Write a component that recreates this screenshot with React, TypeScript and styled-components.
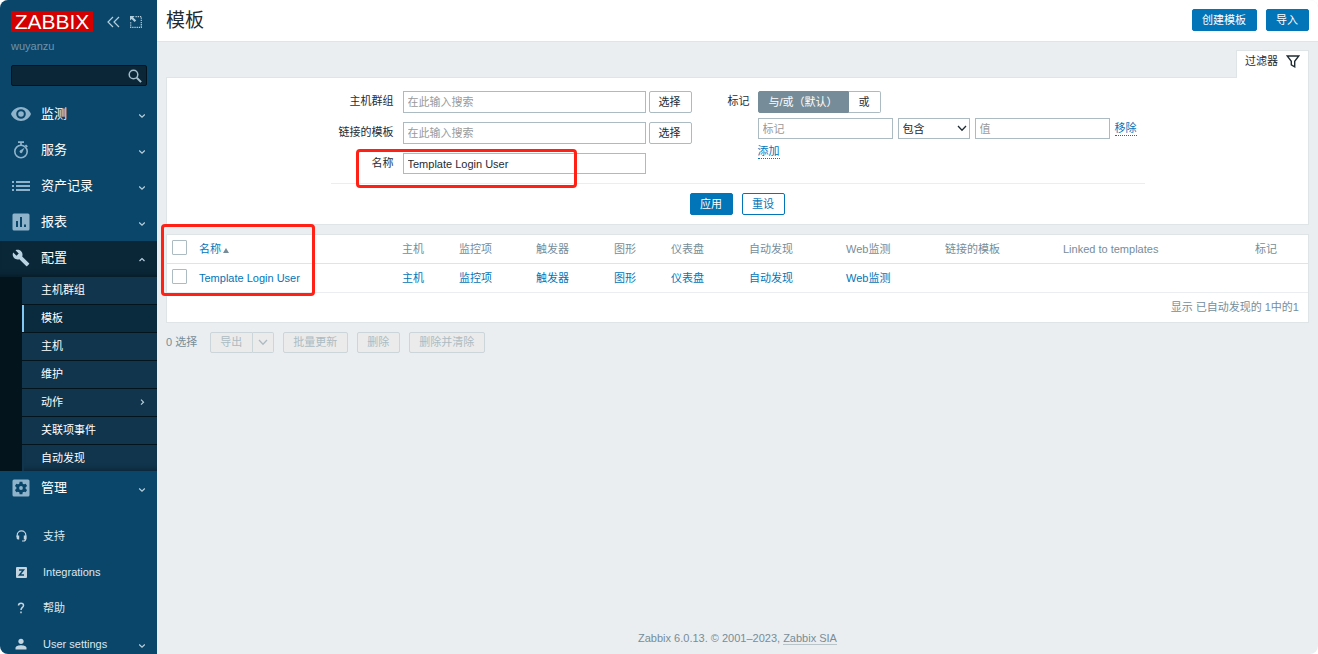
import React, { useState } from 'react';
import styled, { createGlobalStyle, css } from 'styled-components';

const font = `"Liberation Sans", "Noto Sans CJK SC", sans-serif`;

const GlobalStyle = createGlobalStyle`
  *, *::before, *::after { box-sizing: border-box; }
  html { background: #ffffff; }
  body {
    margin: 0;
    color: #1f2c33;
    font-family: ${font};
    font-size: 11px;
    line-height: 16px;
  }
  button, input, select { font: inherit; color: inherit; }
  a { color: #0275b8; text-decoration: none; }
`;

const Page = styled.div`
  position: relative;
  display: flex;
  min-height: 100vh;
  overflow: hidden;
  border-radius: 8px;
  background: #ebeef0;
`;

/* ---------- sidebar ---------- */

const Sidebar = styled.aside`
  flex: none;
  width: 157px;
  height: 100vh;
  overflow: hidden;
  background: #0a466a;
  color: #ffffff;
`;

const SidebarTop = styled.div`
  display: flex;
  align-items: center;
  gap: 10px;
  padding: 11px 11px 0;
`;

const Logo = styled.a`
  flex: none;
  width: 82px;
  height: 21px;
  margin-right: 4px;
  background: #d40000;
  color: #ffffff;
  font-size: 21px;
  line-height: 21px;
  text-align: center;
`;

const IconButton = styled.button`
  display: flex;
  padding: 0;
  border: 0;
  background: none;
  color: #b4cede;
`;

const ServerName = styled.div`
  padding: 6px 11px 0;
  color: #6f94ab;
`;

const SearchForm = styled.form`
  display: flex;
  align-items: center;
  height: 21px;
  margin: 11px 10px 11px 11px;
  border: 1px solid #03141f;
  border-radius: 2px;
  background: #0a2637;
`;

const SearchInput = styled.input`
  flex: 1;
  min-width: 0;
  border: 0;
  outline: 0;
  background: none;
  color: #ffffff;
`;

const SearchButton = styled.button`
  display: flex;
  padding: 0 4px;
  border: 0;
  background: none;
  color: #a3bccb;
`;

const Menu = styled.ul`
  margin: 0;
  padding: 0;
  list-style: none;
`;

const MenuLink = styled.a<{ $open?: boolean }>`
  display: flex;
  align-items: center;
  height: 36px;
  padding: 0 10px 2px;
  background: ${p => (p.$open ? '#0a2738' : 'transparent')};
  box-shadow: ${p => (p.$open ? 'inset 0 -6px 6px -6px rgba(0, 0, 0, 0.5)' : 'none')};
  color: #ffffff;
  font-size: 13px;
`;

const MenuIcon = styled.span<{ $open?: boolean }>`
  display: flex;
  justify-content: center;
  width: 22px;
  margin-right: 9px;
  color: ${p => (p.$open ? '#b9d3e3' : '#8fb3ca')};
`;

const MenuText = styled.span`
  flex: 1;
`;

const SubMenu = styled.ul`
  margin: 0;
  padding: 0 0 0 22px;
  list-style: none;
  background: #04141d;
`;

const SubLink = styled.a<{ $current?: boolean }>`
  display: flex;
  align-items: center;
  height: 100%;
  padding: 0 10px 2px 17px;
  border-left: 2px solid ${p => (p.$current ? '#82c8f5' : '#10354d')};
  background: ${p => (p.$current ? '#0a2b3e' : '#10354d')};
  color: #ffffff;
`;

const SubItem = styled.li`
  height: 28px;
  border-bottom: 1px solid #04141d;
  &:last-child {
    height: 26px;
    border-bottom: 0;
  }
  &:last-child ${SubLink} {
    padding-bottom: 0;
    box-shadow: inset 0 -6px 6px -6px rgba(0, 0, 0, 0.5);
  }
`;

const UserMenu = styled(Menu)`
  margin-top: 11px;
`;

const UserLink = styled.a`
  display: flex;
  align-items: center;
  height: 36px;
  padding: 0 10px;
  color: #dce8f0;
`;

const UserIcon = styled.span`
  display: flex;
  justify-content: center;
  width: 22px;
  margin-right: 11px;
  color: #c3d5e0;
`;

/* ---------- main column ---------- */

const Main = styled.div`
  display: flex;
  flex: 1;
  flex-direction: column;
  min-width: 0;
`;

const Header = styled.header`
  display: flex;
  align-items: center;
  gap: 9px;
  height: 42px;
  padding: 0 9px 2px;
  border-bottom: 1px solid #dfe4e7;
  background: #ffffff;
`;

const Title = styled.h1`
  flex: 1;
  margin: 0;
  padding-top: 3px;
  font-size: 19px;
  font-weight: 400;
  line-height: 24px;
`;

const buttonKinds = {
  primary: css`
    border-color: #0275b8;
    background: #0275b8;
    color: #ffffff;
  `,
  outline: css`
    border-color: #0275b8;
    background: #ffffff;
    color: #0275b8;
  `,
  grey: css`
    border-color: #acbbc2;
    background: #ffffff;
    color: #1f2c33;
  `,
};

const Button = styled.button<{ $kind: keyof typeof buttonKinds }>`
  height: 22px;
  padding: 0 10px 0 9px;
  border: 1px solid;
  border-radius: 2px;
  line-height: 18px;
  white-space: nowrap;
  ${p => buttonKinds[p.$kind]}
`;

const Content = styled.main`
  flex: 1;
  padding: 8px 9px 0;
`;

const FilterTabs = styled.div`
  display: flex;
  justify-content: flex-end;
`;

const FilterTab = styled.button`
  position: relative;
  display: flex;
  align-items: center;
  gap: 8px;
  height: 28px;
  margin-bottom: -1px;
  padding: 0 8px 7px;
  border: 1px solid #dfe4e7;
  border-bottom: 0;
  background: #ffffff;
`;

const FilterPanel = styled.form`
  padding: 13px 0 9px;
  border: 1px solid #dfe4e7;
  background: #ffffff;
`;

const FilterBody = styled.div`
  display: flex;
  width: 814px;
  max-width: 100%;
  margin: 0 auto;
  padding-bottom: 8px;
  border-bottom: 1px solid #ebeef0;
`;

const FilterFields = styled.div`
  display: grid;
  grid-template-columns: 69px 243px 43px;
  grid-auto-rows: 22px;
  column-gap: 3px;
  row-gap: 9px;
  align-items: start;
`;

const FieldLabel = styled.label`
  padding-right: 6px;
  line-height: 20px;
  text-align: right;
  white-space: nowrap;
`;

const TextInput = styled.input<{ $multi?: boolean }>`
  width: 100%;
  min-width: 0;
  height: ${p => (p.$multi ? 22 : 21)}px;
  padding: 0 4px;
  border: 1px solid #acbbc2;
  border-radius: 0;
  outline: 0;
  background: #ffffff;
  &::placeholder { color: #9a9a9a; opacity: 1; }
`;

const TagFields = styled.fieldset`
  display: flex;
  gap: 8px;
  min-width: 0;
  margin: 0 0 0 36px;
  padding: 0;
  border: 0;
`;

const TagLabel = styled.span`
  line-height: 20px;
`;

const TagColumn = styled.div`
  display: flex;
  flex-direction: column;
  align-items: flex-start;
  gap: 5px;
`;

const Segments = styled.div`
  display: flex;
  height: 22px;
`;

const Segment = styled.label`
  display: flex;
  align-items: center;
  padding: 0 10px;
  border: 1px solid #acbbc2;
  background: #ffffff;
  &:first-child { border-radius: 2px 0 0 2px; }
  &:last-child { border-left: 0; border-radius: 0 2px 2px 0; }
  &:has(input:checked) {
    border-color: #768d99;
    background: #768d99;
    color: #ffffff;
  }
  input {
    position: absolute;
    opacity: 0;
    pointer-events: none;
  }
`;

const TagRow = styled.div`
  display: grid;
  grid-template-columns: 135px 72px 135px auto;
  column-gap: 5px;
  align-items: center;
`;

const SelectBox = styled.span`
  position: relative;
  display: block;
  svg {
    position: absolute;
    top: 7px;
    right: 3px;
    pointer-events: none;
  }
`;

const Select = styled.select`
  appearance: none;
  display: block;
  width: 100%;
  height: 21px;
  padding: 0 16px 0 4px;
  border: 1px solid #acbbc2;
  border-radius: 0;
  background: #ffffff;
`;

const DottedButton = styled.button`
  padding: 0;
  border: 0;
  border-bottom: 1px dotted #0275b8;
  background: none;
  color: #0275b8;
  line-height: 14px;
`;

const FilterButtons = styled.div`
  display: flex;
  justify-content: center;
  gap: 9px;
  padding-top: 9px;
`;

/* ---------- table ---------- */

const TablePanel = styled.div`
  margin-top: 9px;
  border: 1px solid #dfe4e7;
  background: #ffffff;
`;

const Table = styled.table`
  width: 100%;
  table-layout: fixed;
  border-collapse: collapse;
  th, td {
    height: 28px;
    padding: 0 5px;
    border-bottom: 1px solid #dfe4e7;
    color: #768d99;
    font-weight: 400;
    text-align: left;
    white-space: nowrap;
  }
  td { height: 29px; border-color: #ebeef0; }
`;

const Col = styled.col<{ $w?: number }>`
  width: ${p => (p.$w ? `${p.$w}px` : 'auto')};
`;

const Check = styled.input`
  appearance: none;
  display: block;
  width: 15px;
  height: 15px;
  margin: 0 0 3px;
  border: 1px solid #acbbc2;
  border-radius: 1px;
  background: #ffffff;
  &:checked { background: #0275b8; }
`;

const SortArrow = styled.svg`
  margin-left: 2px;
`;

const TableStats = styled.div`
  height: 29px;
  padding: 0 9px;
  color: #768d99;
  line-height: 28px;
  text-align: right;
`;

const Actions = styled.div`
  display: flex;
  align-items: center;
  gap: 9px;
  margin-top: 9px;
  color: #768d99;
`;

const SelectedCount = styled.span`
  margin-right: 4px;
`;

const ActionButton = styled.button`
  display: flex;
  align-items: center;
  height: 21px;
  padding: 0 10px 0 9px;
  border: 1px solid #ccd5d9;
  border-radius: 2px;
  background: #ebebeb;
  color: #acbbc2;
`;

const SplitButton = styled.div`
  display: flex;
  ${ActionButton}:first-child { border-radius: 2px 0 0 2px; }
  ${ActionButton}:last-child {
    padding: 0 5px;
    border-left: 0;
    border-radius: 0 2px 2px 0;
  }
`;

const Footer = styled.footer`
  padding: 0 9px 8px;
  color: #768d99;
  text-align: center;
  a {
    border-bottom: 1px solid #b8c4ca;
    color: #768d99;
  }
`;

const Marker = styled.div<{ $x: number; $y: number; $w: number; $h: number }>`
  position: absolute;
  left: ${p => p.$x}px;
  top: ${p => p.$y}px;
  width: ${p => p.$w}px;
  height: ${p => p.$h}px;
  border: 3px solid #ff2116;
  border-radius: 4px;
  pointer-events: none;
`;

/* ---------- icons ---------- */

const Chevron = ({ dir = 'down' }: { dir?: 'down' | 'up' | 'right' }) => {
  const d = {
    down: 'M2.200 5.500 5 8.200 7.800 5.500',
    up: 'M2.500 8 5 5.500 7.500 8',
    right: 'M4 2.700 6.500 5.200 4 7.700',
  }[dir];
  return (
    <svg width="10" height="10" viewBox="0 0 10 10" fill="none" stroke="#b9cfdc" strokeWidth="1.200">
      <path d={d} />
    </svg>
  );
};

const WideChevron = ({ color }: { color: string }) => (
  <svg width="10" height="7" viewBox="0 0 10 7" fill="none" stroke={color} strokeWidth="1.300">
    <path d="M1 1 5 5.200 9 1" />
  </svg>
);

const EyeIcon = () => (
  <svg width="20" height="14" viewBox="0 0 20 14" fill="currentColor">
    <path fillRule="evenodd" d="M10 0C5.400 0 1.600 2.900 0 7c1.600 4.100 5.400 7 10 7s8.400-2.900 10-7c-1.600-4.100-5.400-7-10-7Zm0 11.800a4.800 4.800 0 1 1 0-9.600 4.800 4.800 0 0 1 0 9.600Z" />
    <circle cx="10" cy="7" r="2.800" />
  </svg>
);

const StopwatchIcon = () => (
  <svg width="16" height="18" viewBox="0 0 16 18" fill="none" stroke="currentColor">
    <circle cx="8" cy="10.500" r="6.200" strokeWidth="1.600" />
    <path d="M5 1.200h6M8 1.500v3M12.500 4l1.800 1.800" strokeWidth="1.700" />
    <path d="M11.500 6.800 9.200 11.600A1.500 1.500 0 1 1 7 9.400Z" fill="currentColor" stroke="none" />
  </svg>
);

const ListIcon = () => (
  <svg width="18" height="12" viewBox="0 0 18 12" fill="currentColor">
    <path d="M0 1h2v2H0zM0 5h2v2H0zM0 9h2v2H0zM4 1h14v2H4zM4 5h14v2H4zM4 9h14v2H4z" />
  </svg>
);

const ReportIcon = () => (
  <svg width="18" height="18" viewBox="0 0 18 18">
    <rect x=".5" y=".5" width="17" height="17" rx="1.500" fill="currentColor" />
    <path d="M4 8h2v6H4zM8 4h2v10H8zM12 11.500h2V14h-2z" fill="#0a466a" />
  </svg>
);

const WrenchIcon = () => (
  <svg width="18" height="18" viewBox="0 0 24 24" fill="currentColor">
    <path d="m22.700 19-9.100-9.100c.900-2.300.400-5-1.500-6.900-2-2-5-2.400-7.400-1.300L9 6 6 9 1.600 4.700C.4 7.100.9 10.100 2.900 12.100c1.900 1.900 4.600 2.400 6.900 1.500l9.100 9.100c.4.400 1 .4 1.400 0l2.300-2.300c.5-.4.5-1.100.1-1.400Z" />
  </svg>
);

const GearIcon = () => (
  <svg width="18" height="18" viewBox="0 0 18 18">
    <rect x=".5" y=".5" width="17" height="17" rx="1.500" fill="currentColor" />
    <g fill="#0a466a">
      <circle cx="9" cy="9" r="4.600" />
      <path d="M7.600 2.800h2.800l.4 3H7.200zM7.200 12.200h3.600l-.4 3H7.600z" />
      <path d="M7.600 2.800h2.800l.4 3H7.200zM7.200 12.200h3.600l-.4 3H7.600z" transform="rotate(60 9 9)" />
      <path d="M7.600 2.800h2.800l.4 3H7.200zM7.200 12.200h3.600l-.4 3H7.600z" transform="rotate(120 9 9)" />
    </g>
    <circle cx="9" cy="9" r="1.900" fill="currentColor" />
  </svg>
);

const HeadsetIcon = () => (
  <svg width="11" height="12" viewBox="0 0 11 12" fill="none" stroke="currentColor">
    <path d="M1.200 7V5.200a4.300 4.300 0 0 1 8.600 0V8.800c0 1.500-1 2.200-2.300 2.200H6" strokeWidth="1.200" />
    <path d="M.6 5.500h2.600v4H2A1.400 1.400 0 0 1 .6 8.100zM7.800 5.500h2.600v3.200l-1.300.8H7.800z" fill="currentColor" stroke="none" />
  </svg>
);

const ZIcon = () => (
  <svg width="11" height="11" viewBox="0 0 11 11">
    <rect width="11" height="11" rx="1" fill="currentColor" />
    <path d="M3 2.900h4.500L3.500 8h4.500" fill="none" stroke="#0a466a" strokeWidth="1.500" />
  </svg>
);

const HelpIcon = () => (
  <svg width="8" height="12" viewBox="0 0 8 12" fill="none" stroke="currentColor" strokeWidth="1.500">
    <path d="M1.500 3.600C1.500 2 2.500 1.200 4 1.200s2.500.9 2.500 2.200C6.500 5.400 4 5.500 4 8" />
    <path d="M4 9.600v1.600" />
  </svg>
);

const UserGlyph = () => (
  <svg width="12" height="12" viewBox="0 0 12 12" fill="currentColor">
    <circle cx="6" cy="3.300" r="2.600" />
    <path d="M.5 11.500V10C.5 8 3.500 7.200 6 7.200s5.500.8 5.500 2.800v1.500z" />
  </svg>
);

const CollapseIcon = () => (
  <svg width="13" height="12" viewBox="0 0 13 12" fill="none" stroke="currentColor" strokeWidth="1.200">
    <path d="M6 1 1 6l5 5M12 1 7 6l5 5" />
  </svg>
);

const KioskIcon = () => (
  <svg width="12" height="12" viewBox="0 0 12 12" fill="none" stroke="currentColor">
    <path d="M5.500.7h5.800v10.600H.7V5.500" strokeDasharray="1.300 .9" strokeWidth="1.200" />
    <path d="M0 0h4.600L3.200 1.400l3 3-1.600 1.600-3-3L0 4.600z" fill="currentColor" stroke="none" />
  </svg>
);

const SearchIcon = () => (
  <svg width="14" height="14" viewBox="0 0 14 14" fill="none" stroke="currentColor">
    <circle cx="5.500" cy="5.500" r="4.300" strokeWidth="1.500" />
    <path d="m8.800 8.800 4.300 4.300" strokeWidth="2" />
  </svg>
);

const FunnelIcon = () => (
  <svg width="14" height="13" viewBox="0 0 14 13" fill="none" stroke="#1f2c33" strokeWidth="1.400">
    <path d="M1.200 1h11.600L8.700 6.200v5.600L5.300 9.800V6.200z" />
  </svg>
);

/* ---------- data ---------- */

const subItems = ['主机群组', '模板', '主机', '维护', '动作', '关联项事件', '自动发现'];

const menu = [
  { text: '监测', icon: <EyeIcon /> },
  { text: '服务', icon: <StopwatchIcon /> },
  { text: '资产记录', icon: <ListIcon /> },
  { text: '报表', icon: <ReportIcon /> },
  { text: '配置', icon: <WrenchIcon />, open: true },
  { text: '管理', icon: <GearIcon /> },
];

const userMenu = [
  { text: '支持', icon: <HeadsetIcon /> },
  { text: 'Integrations', icon: <ZIcon /> },
  { text: '帮助', icon: <HelpIcon /> },
  { text: 'User settings', icon: <UserGlyph />, more: true },
];

const columns = [
  { text: '主机', width: 57, link: true },
  { text: '监控项', width: 77, link: true },
  { text: '触发器', width: 78, link: true },
  { text: '图形', width: 57, link: true },
  { text: '仪表盘', width: 78, link: true },
  { text: '自动发现', width: 97, link: true },
  { text: 'Web监测', width: 99, link: true },
  { text: '链接的模板', width: 118 },
  { text: 'Linked to templates', width: 192 },
  { text: '标记', width: 58 },
];

export default function App() {
  const [name, setName] = useState('Template Login User');

  return (
    <>
      <GlobalStyle />
      <Page>
        <Sidebar>
          <SidebarTop>
            <Logo href="#">ZABBIX</Logo>
            <IconButton aria-label="Hide sidebar"><CollapseIcon /></IconButton>
            <IconButton aria-label="Kiosk mode"><KioskIcon /></IconButton>
          </SidebarTop>
          <ServerName>wuyanzu</ServerName>
          <SearchForm role="search">
            <SearchInput aria-label="Search" />
            <SearchButton type="button" aria-label="Search"><SearchIcon /></SearchButton>
          </SearchForm>
          <nav>
            <Menu>
              {menu.map(item => (
                <li key={item.text}>
                  <MenuLink href="#" $open={item.open}>
                    <MenuIcon $open={item.open}>{item.icon}</MenuIcon>
                    <MenuText>{item.text}</MenuText>
                    <Chevron dir={item.open ? 'up' : 'down'} />
                  </MenuLink>
                  {item.open && (
                    <SubMenu>
                      {subItems.map(text => (
                        <SubItem key={text}>
                          <SubLink href="#" $current={text === '模板'}>
                            <MenuText>{text}</MenuText>
                            {text === '动作' && <Chevron dir="right" />}
                          </SubLink>
                        </SubItem>
                      ))}
                    </SubMenu>
                  )}
                </li>
              ))}
            </Menu>
            <UserMenu>
              {userMenu.map(item => (
                <li key={item.text}>
                  <UserLink href="#">
                    <UserIcon>{item.icon}</UserIcon>
                    <MenuText>{item.text}</MenuText>
                    {item.more && <Chevron />}
                  </UserLink>
                </li>
              ))}
            </UserMenu>
          </nav>
        </Sidebar>

        <Main>
          <Header>
            <Title>模板</Title>
            <Button $kind="primary">创建模板</Button>
            <Button $kind="primary">导入</Button>
          </Header>

          <Content>
            <FilterTabs>
              <FilterTab type="button">过滤器<FunnelIcon /></FilterTab>
            </FilterTabs>
            <FilterPanel onSubmit={e => e.preventDefault()}>
              <FilterBody>
                <FilterFields>
                  <FieldLabel htmlFor="groups">主机群组</FieldLabel>
                  <TextInput id="groups" $multi placeholder="在此输入搜索" />
                  <Button type="button" $kind="grey">选择</Button>
                  <FieldLabel htmlFor="linked">链接的模板</FieldLabel>
                  <TextInput id="linked" $multi placeholder="在此输入搜索" />
                  <Button type="button" $kind="grey">选择</Button>
                  <FieldLabel htmlFor="name">名称</FieldLabel>
                  <TextInput id="name" value={name} onChange={e => setName(e.target.value)} />
                </FilterFields>
                <TagFields aria-label="标记">
                  <TagLabel>标记</TagLabel>
                  <TagColumn>
                    <Segments>
                      <Segment><input type="radio" name="evaltype" defaultChecked />与/或（默认）</Segment>
                      <Segment><input type="radio" name="evaltype" />或</Segment>
                    </Segments>
                    <TagRow>
                      <TextInput aria-label="标记" placeholder="标记" />
                      <SelectBox>
                        <Select aria-label="运算符"><option>包含</option></Select>
                        <WideChevron color="#1f2c33" />
                      </SelectBox>
                      <TextInput aria-label="值" placeholder="值" />
                      <DottedButton type="button">移除</DottedButton>
                    </TagRow>
                    <DottedButton type="button">添加</DottedButton>
                  </TagColumn>
                </TagFields>
              </FilterBody>
              <FilterButtons>
                <Button $kind="primary">应用</Button>
                <Button type="button" $kind="outline">重设</Button>
              </FilterButtons>
            </FilterPanel>

            <TablePanel>
              <Table>
                <colgroup>
                  <Col $w={27} />
                  <Col />
                  {columns.map(c => <Col key={c.text} $w={c.width} />)}
                </colgroup>
                <thead>
                  <tr>
                    <th><Check type="checkbox" aria-label="全选" /></th>
                    <th>
                      <a href="#">
                        名称
                        <SortArrow width="6" height="5" viewBox="0 0 6 5"><path d="M3 0 6 5H0z" fill="#768d99" /></SortArrow>
                      </a>
                    </th>
                    {columns.map(c => <th key={c.text}>{c.text}</th>)}
                  </tr>
                </thead>
                <tbody>
                  <tr>
                    <td><Check type="checkbox" aria-label="Template Login User" /></td>
                    <td><a href="#">Template Login User</a></td>
                    {columns.map(c => <td key={c.text}>{c.link && <a href="#">{c.text}</a>}</td>)}
                  </tr>
                </tbody>
              </Table>
              <TableStats>显示 已自动发现的 1中的1</TableStats>
            </TablePanel>

            <Actions>
              <SelectedCount>0 选择</SelectedCount>
              <SplitButton>
                <ActionButton disabled>导出</ActionButton>
                <ActionButton disabled aria-label="导出格式"><WideChevron color="#acbbc2" /></ActionButton>
              </SplitButton>
              <ActionButton disabled>批量更新</ActionButton>
              <ActionButton disabled>删除</ActionButton>
              <ActionButton disabled>删除并清除</ActionButton>
            </Actions>
          </Content>

          <Footer>Zabbix 6.0.13. © 2001–2023, <a href="#">Zabbix SIA</a></Footer>
        </Main>

        <Marker $x={356} $y={149} $w={221} $h={39} />
        <Marker $x={161} $y={224} $w={154} $h={72} />
      </Page>
    </>
  );
}
